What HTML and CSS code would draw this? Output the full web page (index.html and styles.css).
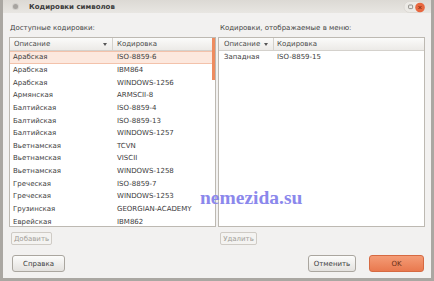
FILE: index.html
```html
<!DOCTYPE html>
<html lang="ru">

<head>
    <meta charset="UTF-8">
    <title>Кодировки символов</title>
    <link rel="stylesheet" href="styles.css">
</head>

<body>
    <div class="window">
        <div class="titlebar">
            <span class="title-dot"></span>
            <span class="title">Кодировки символов</span>
            <svg class="controls" width="22" height="13" viewBox="0 0 22 13">
                <rect x="1" y="1.5" width="20.5" height="11" rx="5.5" fill="#eceae6" stroke="#d9d6d1" stroke-width="0.8"/>
                <rect x="5.6" y="5" width="4" height="3.6" rx="0.8" fill="none" stroke="#7a7772" stroke-width="0.8"/>
                <circle cx="17" cy="7.5" r="4.8" fill="#e8673f"/>
                <path d="M15.5 6 L18.5 9 M18.5 6 L15.5 9" stroke="#7a2c14" stroke-width="0.9"/>
            </svg>
        </div>

        <div class="content">
            <div class="panes">
                <div class="pane">
                    <div class="pane-label">Доступные кодировки:</div>
                    <div class="list">
                        <div class="list-head">
                            <div class="col-desc left-desc">Описание <span class="sort-arrow"></span></div>
                            <div class="col-code">Кодировка</div>
                        </div>
                        <div class="row selected"><div class="col-desc left-desc">Арабская</div><div class="col-code">ISO-8859-6</div></div>
                        <div class="row"><div class="col-desc left-desc">Арабская</div><div class="col-code">IBM864</div></div>
                        <div class="row"><div class="col-desc left-desc">Арабская</div><div class="col-code">WINDOWS-1256</div></div>
                        <div class="row"><div class="col-desc left-desc">Армянская</div><div class="col-code">ARMSCII-8</div></div>
                        <div class="row"><div class="col-desc left-desc">Балтийская</div><div class="col-code">ISO-8859-4</div></div>
                        <div class="row"><div class="col-desc left-desc">Балтийская</div><div class="col-code">ISO-8859-13</div></div>
                        <div class="row"><div class="col-desc left-desc">Балтийская</div><div class="col-code">WINDOWS-1257</div></div>
                        <div class="row"><div class="col-desc left-desc">Вьетнамская</div><div class="col-code">TCVN</div></div>
                        <div class="row"><div class="col-desc left-desc">Вьетнамская</div><div class="col-code">VISCII</div></div>
                        <div class="row"><div class="col-desc left-desc">Вьетнамская</div><div class="col-code">WINDOWS-1258</div></div>
                        <div class="row"><div class="col-desc left-desc">Греческая</div><div class="col-code">ISO-8859-7</div></div>
                        <div class="row"><div class="col-desc left-desc">Греческая</div><div class="col-code">WINDOWS-1253</div></div>
                        <div class="row"><div class="col-desc left-desc">Грузинская</div><div class="col-code">GEORGIAN-ACADEMY</div></div>
                        <div class="row"><div class="col-desc left-desc">Еврейская</div><div class="col-code">IBM862</div></div>
                        <div class="scroll-thumb"></div>
                    </div>
                    <button class="btn-small" disabled>Добавить</button>
                </div>

                <div class="pane">
                    <div class="pane-label right-label">Кодировки, отображаемые в меню:</div>
                    <div class="list">
                        <div class="list-head">
                            <div class="col-desc right-desc">Описание <span class="sort-arrow"></span></div>
                            <div class="col-code right-code">Кодировка</div>
                        </div>
                        <div class="row"><div class="col-desc right-desc">Западная</div><div class="col-code right-code">ISO-8859-15</div></div>
                    </div>
                    <button class="btn-small btn-remove" disabled>Удалить</button>
                </div>
            </div>

            <div class="dialog-buttons">
                <button class="btn btn-help">Справка</button>
                <button class="btn btn-cancel">Отменить</button>
                <button class="btn btn-ok">OK</button>
            </div>
        </div>

        <div class="watermark">nemezida.su</div>
    </div>
</body>

</html>
```

FILE: styles.css
```css
* {
    margin: 0;
    padding: 0;
    box-sizing: border-box;
}

body {
    width: 434px;
    height: 281px;
    overflow: hidden;
    background-color: #aaa7a2;
    font-family: "DejaVu Sans", sans-serif;
    font-size: 7px;
    color: #3c3c3c;
}

.window {
    position: relative;
    margin-left: 3px;
    width: 428px;
    height: 278px;
    background-color: #f2f1f0;
    display: flex;
    flex-direction: column;
}

/* title bar */
.titlebar {
    height: 13px;
    display: flex;
    align-items: center;
    padding-left: 10px;
    background-image: linear-gradient(#dcd9d4, #e8e6e2);
}

.title-dot {
    width: 5px;
    height: 5px;
    border-radius: 50%;
    background-color: #a7a4a0;
    box-shadow: 0 0 0 1px #d2d0cc;
}

.title {
    margin-left: 11px;
    font-weight: bold;
    color: #3a3a3a;
}

.controls {
    margin-left: auto;
    margin-right: 6px;
}

/* main area */
.content {
    flex: 1;
    display: flex;
    flex-direction: column;
    padding: 9px 6px 6px 6px;
}

.panes {
    display: flex;
    gap: 2px;
}

.pane {
    width: 207px;
    display: flex;
    flex-direction: column;
    align-items: flex-start;
}

.pane-label {
    height: 12px;
    line-height: 12px;
    margin-bottom: 3px;
    padding-left: 1px;
    color: #454545;
}

.right-label {
    padding-left: 2px;
}

.list {
    position: relative;
    width: 207px;
    height: 190px;
    border: 1px solid #bdb9b2;
    background-color: #fff;
    overflow: hidden;
}

.list-head {
    height: 13px;
    display: flex;
    align-items: center;
    border-bottom: 1px solid #d4d1cc;
    background-image: linear-gradient(#fbfbfa, #eceae7);
    color: #4a4a4a;
}

.list-head .col-desc {
    height: 100%;
    display: flex;
    align-items: center;
    justify-content: space-between;
    border-right: 1px solid #d4d1cc;
    padding-right: 5px;
}

.sort-arrow {
    width: 0;
    height: 0;
    border-left: 2px solid transparent;
    border-right: 2px solid transparent;
    border-top: 3px solid #555;
}

.row {
    height: 12.65px;
    display: flex;
    align-items: center;
}

.row.selected {
    background-color: #fce8de;
    box-shadow: inset 0 1px 0 #f3c2ab, inset 0 -1px 0 #f3c2ab;
}

.left-desc {
    width: 103px;
    padding-left: 4px;
}

.row .left-desc {
    padding-left: 3px;
}

.col-code {
    padding-left: 4px;
}

.row .col-code {
    padding-left: 4px;
}

.right-desc {
    width: 55px;
    padding-left: 5px;
}

.right-code {
    padding-left: 3px;
}

.row .right-code {
    padding-left: 3px;
}

.scroll-thumb {
    position: absolute;
    top: 0;
    right: 0;
    width: 3px;
    height: 42px;
    background-color: #ee8c60;
}

/* buttons */
.btn-small {
    margin-top: 5px;
    margin-left: 2px;
    width: 41px;
    height: 13px;
    border: 1px solid #cfcbc5;
    border-radius: 2px;
    background-color: #f4f3f1;
    font-family: "DejaVu Sans", sans-serif;
    font-size: 7px;
    color: #a19d97;
}

.btn-remove {
    width: 37px;
}

.dialog-buttons {
    margin-top: auto;
    display: flex;
    align-items: center;
}

.btn {
    height: 17px;
    border: 1px solid #aaa69f;
    border-radius: 3px;
    background-image: linear-gradient(#fcfcfb, #e3e1de);
    font-family: "DejaVu Sans", sans-serif;
    font-size: 7px;
    color: #3c3c3c;
}

.btn-help {
    width: 53px;
    margin-left: 3px;
}

.btn-cancel {
    width: 48px;
    margin-left: auto;
}

.btn-ok {
    width: 55px;
    margin-left: 13px;
    margin-right: 1px;
    border-color: #d66a42;
    background-image: linear-gradient(#f49c76, #e9794f);
    color: #6e3018;
}

.watermark {
    position: absolute;
    left: 197px;
    top: 188px;
    font-family: "Liberation Serif", serif;
    font-weight: bold;
    font-size: 19.5px;
    line-height: 20px;
    color: #8b88ec;
}
```
